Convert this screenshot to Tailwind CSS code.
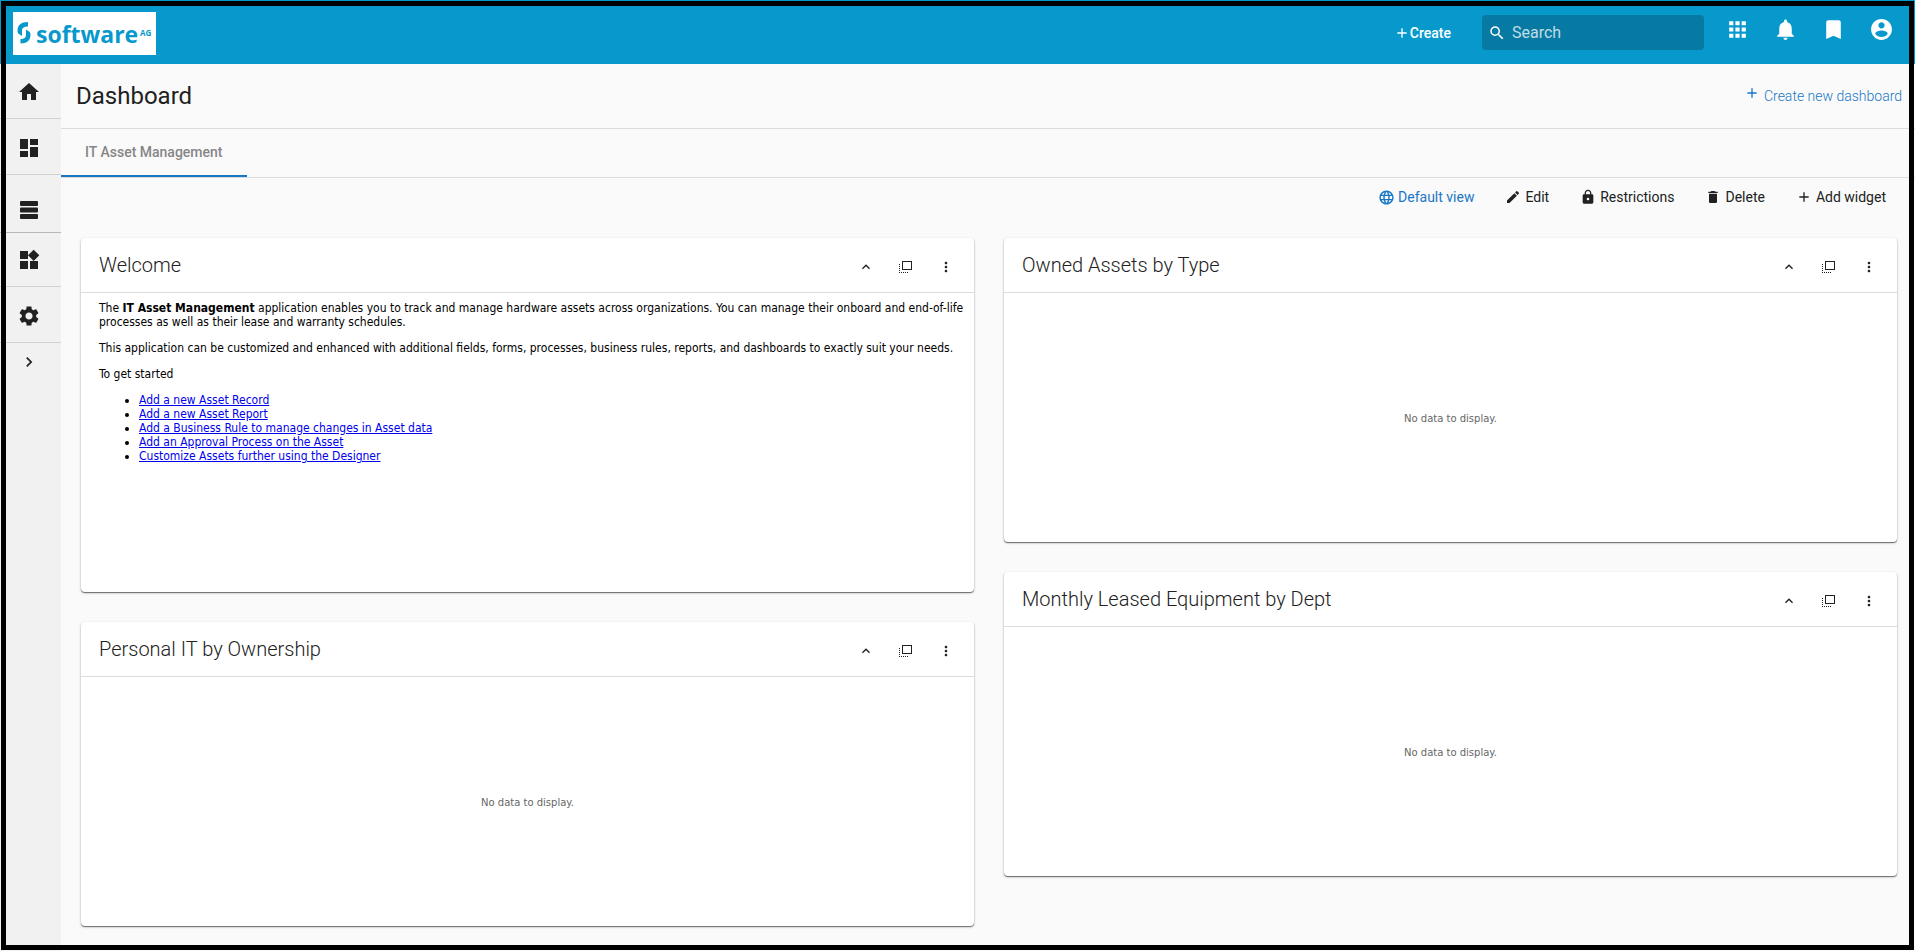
<!DOCTYPE html>
<html lang="en">
<head>
<meta charset="utf-8">
<title>Dashboard</title>
<script src="https://cdn.jsdelivr.net/npm/@tailwindcss/browser@4"></script>
</head>
<body class="min-h-screen flex flex-col bg-[#fafafa] font-[Roboto,sans-serif] text-[#212121]">
<svg class="hidden">
  <symbol id="up" viewBox="0 0 24 24"><path d="M12 8l-6 6 1.41 1.41L12 10.83l4.59 4.58L18 14z"/></symbol>
  <symbol id="flip" viewBox="0 0 14 14"><path d="M3 1h10v9H3zM4 2v7h8V2zM0 4h1v1H0zM0 6h1v1H0zM0 8h1v1H0zM0 10h1v1H0zM0 12h1v1H0zM2 12h1v1H2zM4 12h1v1H4zM6 12h1v1H6zM8 12h1v1H8z" fill-rule="evenodd"/></symbol>
  <symbol id="more" viewBox="0 0 24 24"><path d="M12 8c1.100 0 2-.9 2-2s-.9-2-2-2-2 .9-2 2 .9 2 2 2zm0 2c-1.100 0-2 .9-2 2s.9 2 2 2 2-.9 2-2-.9-2-2-2zm0 6c-1.100 0-2 .9-2 2s.9 2 2 2 2-.9 2-2-.9-2-2-2z"/></symbol>
  <symbol id="plus" viewBox="0 0 24 24"><path d="M19 13h-6v6h-2v-6H5v-2h6V5h2v6h6z"/></symbol>
</svg>
<div class="pointer-events-none fixed inset-px z-10 border-5 border-black"></div>

<header class="flex h-16 shrink-0 items-start bg-[#0899cc] pl-[13px] pr-[21px] pt-3 text-white">
  <a href="#" aria-label="Software AG" class="flex h-[43px] w-[143px] bg-white">
    <svg class="h-full w-full" viewBox="0 0 143 43" fill="#0899cc">
      <path d="M15 10v4.500c-4.500 0-6 1.500-6 4.500v5l-3-2c-1-.8-1.500-1.500-1.500-3C4.500 13 8 10 15 10zM7.500 31.500V27c4 0 5.500-1.500 5.500-4.500v-5l3 2c1 .8 1.500 1.500 1.500 3 0 6-3.500 9-10 9z"/>
      <text x="23" y="31" font-family="Open Sans, sans-serif" font-weight="700" font-size="23">software</text>
      <text x="127" y="24" font-family="Open Sans, sans-serif" font-weight="700" font-size="8">AG</text>
    </svg>
  </a>
  <button class="ml-auto mt-[9px] flex items-center text-sm leading-6 font-medium"><svg class="size-4" fill="currentColor"><use href="#plus"/></svg>Create</button>
  <label class="ml-[31px] mt-[3px] flex h-[35px] w-[222px] items-center gap-1.5 rounded bg-[#077aa3] pl-1.5">
    <svg class="size-[18px] shrink-0" viewBox="0 0 24 24" fill="currentColor"><path d="M15.500 14h-.79l-.28-.27A6.470 6.470 0 0 0 16 9.500 6.500 6.500 0 1 0 9.500 16c1.610 0 3.090-.59 4.230-1.570l.27.28v.79l5 4.990L20.490 19l-4.990-5zm-6 0C7.010 14 5 11.990 5 9.500S7.010 5 9.500 5 14 7.010 14 9.500 11.990 14 9.500 14z"/></svg>
    <input type="search" aria-label="Search" placeholder="Search" class="min-w-0 flex-1 bg-transparent text-base text-white placeholder:text-white/75 outline-none">
  </label>
  <nav class="ml-[21px] mt-[5px] flex gap-[23px]">
    <button aria-label="Apps"><svg class="size-[25px]" viewBox="0 0 24 24" fill="currentColor"><path d="M4 8h4V4H4v4zm6 12h4v-4h-4v4zm-6 0h4v-4H4v4zm0-6h4v-4H4v4zm6 0h4v-4h-4v4zm6-10v4h4V4h-4zm-6 4h4V4h-4v4zm6 6h4v-4h-4v4zm0 6h4v-4h-4v4z"/></svg></button>
    <button aria-label="Notifications"><svg class="size-[25px]" viewBox="0 0 24 24" fill="currentColor"><path d="M12 22c1.100 0 2-.9 2-2h-4c0 1.100.89 2 2 2zm6-6v-5c0-3.070-1.640-5.640-4.500-6.320V4c0-.83-.67-1.500-1.500-1.500s-1.500.67-1.500 1.500v.68C7.630 5.360 6 7.920 6 11v5l-2 2v1h16v-1l-2-2z"/></svg></button>
    <button aria-label="Bookmarks"><svg class="size-[25px]" viewBox="0 0 24 24" fill="currentColor"><path d="M17 3H7c-1.100 0-1.990.9-1.990 2L5 21l7-3 7 3V5c0-1.100-.9-2-2-2z"/></svg></button>
    <button aria-label="Account"><svg class="size-[25px]" viewBox="0 0 24 24" fill="currentColor"><path d="M12 2C6.480 2 2 6.480 2 12s4.480 10 10 10 10-4.480 10-10S17.520 2 12 2zm0 3c1.660 0 3 1.340 3 3s-1.340 3-3 3-3-1.340-3-3 1.340-3 3-3zm0 14.200c-2.500 0-4.710-1.280-6-3.220.03-1.990 4-3.080 6-3.080 1.990 0 5.970 1.090 6 3.080-1.290 1.940-3.500 3.220-6 3.220z"/></svg></button>
  </nav>
</header>

<div class="flex flex-1">
  <nav class="w-[61px] shrink-0 bg-[#f1f1f1] text-[#212121]">
    <a href="#" aria-label="Home" class="flex h-[55px] items-center border-b border-[#d2d2d2] pl-[17px] pt-px"><svg class="size-6" viewBox="0 0 24 24" fill="currentColor"><path d="M10 20v-6h4v6h5v-8h3L12 3 2 12h3v8z"/></svg></a>
    <a href="#" aria-label="Dashboards" class="flex h-14 items-center border-b border-[#d2d2d2] pl-[17px] pt-0.5"><svg class="size-6" viewBox="0 0 24 24" fill="currentColor"><path d="M3 13h8V3H3v10zm0 8h8v-6H3v6zm10 0h8V11h-8v10zm0-18v6h8V3h-8z"/></svg></a>
    <a href="#" aria-label="Records" class="flex h-[58px] items-center border-b border-[#b8b8b8] pl-5 pt-3"><svg class="size-[18px]" viewBox="0 0 18 18" fill="currentColor"><rect width="18" height="5" rx="1"/><rect y="6.500" width="18" height="5" rx="1"/><rect y="13" width="18" height="5" rx="1"/></svg></a>
    <a href="#" aria-label="Widgets" class="flex h-[54px] items-center border-b border-[#d2d2d2] pl-[17px]"><svg class="size-6" viewBox="0 0 24 24" fill="currentColor"><path d="M13 13v8h8v-8h-8zM3 21h8v-8H3v8zM3 3v8h8V3H3zm13.660-1.310L11 7.340 16.660 13l5.660-5.660-5.660-5.650z"/></svg></a>
    <a href="#" aria-label="Settings" class="flex h-14 items-center border-b border-[#d2d2d2] pl-[17px] pt-0.5"><svg class="size-6" viewBox="0 0 24 24" fill="currentColor"><path d="M19.140 12.940c.04-.3.06-.61.06-.94 0-.32-.02-.64-.07-.94l2.030-1.580c.18-.14.23-.41.12-.61l-1.920-3.320c-.12-.22-.37-.29-.59-.22l-2.390.96c-.5-.38-1.030-.7-1.620-.94l-.36-2.540c-.04-.24-.24-.41-.48-.41h-3.840c-.24 0-.43.17-.47.41l-.36 2.540c-.59.24-1.130.57-1.620.94l-2.390-.96c-.22-.08-.47 0-.59.22L2.740 8.870c-.12.21-.08.47.12.61l2.030 1.580c-.05.3-.09.63-.09.94s.02.64.07.94l-2.030 1.580c-.18.14-.23.41-.12.61l1.920 3.320c.12.22.37.29.59.22l2.390-.96c.5.38 1.030.7 1.620.94l.36 2.540c.05.24.24.41.48.41h3.840c.24 0 .44-.17.47-.41l.36-2.540c.59-.24 1.130-.56 1.620-.94l2.390.96c.22.08.47 0 .59-.22l1.920-3.320c.12-.22.07-.47-.12-.61l-2.010-1.580zM12 15.600c-1.980 0-3.600-1.620-3.600-3.600s1.620-3.600 3.600-3.600 3.600 1.620 3.600 3.600-1.620 3.600-3.600 3.600z"/></svg></a>
    <button aria-label="Expand menu" class="flex h-[38px] items-center pl-[19px]"><svg class="size-5" viewBox="0 0 24 24" fill="currentColor"><path d="M10 6L8.590 7.410 13.170 12l-4.580 4.590L10 18l6-6z"/></svg></button>
  </nav>

  <main class="min-w-0 flex-1">
    <div class="flex h-[65px] items-center justify-between border-b border-[#dcdcdc] pl-[15px] pr-[13px]">
      <h1 class="text-2xl">Dashboard</h1>
      <a href="#" class="flex items-center gap-1 text-sm font-light text-[#1976c5]"><svg class="mb-1.5 size-4" fill="currentColor"><use href="#plus"/></svg>Create new dashboard</a>
    </div>
    <div class="flex h-[49px] border-b border-[#dcdcdc]" role="tablist">
      <button role="tab" aria-selected="true" class="border-b-2 border-[#1976c5] px-6 text-sm font-medium text-[#868686]">IT Asset Management</button>
    </div>
    <div class="flex h-[38px] items-center justify-end gap-[31px] pr-[29px] text-sm">
      <button class="flex items-center gap-[3px] text-[#1976c5]"><svg class="size-[17px]" viewBox="0 0 24 24" fill="currentColor"><path d="M11.990 2C6.470 2 2 6.480 2 12s4.470 10 9.990 10C17.520 22 22 17.520 22 12S17.520 2 11.990 2zm6.930 6h-2.950c-.32-1.250-.78-2.450-1.380-3.560 1.840.63 3.370 1.910 4.330 3.560zM12 4.040c.83 1.200 1.480 2.530 1.910 3.960h-3.820c.43-1.430 1.080-2.760 1.910-3.960zM4.260 14C4.100 13.360 4 12.690 4 12s.1-1.360.26-2h3.380c-.08.66-.14 1.320-.14 2s.06 1.340.14 2H4.260zm.82 2h2.950c.32 1.250.78 2.450 1.380 3.560-1.840-.63-3.370-1.900-4.330-3.560zm2.950-8H5.080c.96-1.660 2.490-2.930 4.330-3.560C8.810 5.550 8.350 6.750 8.030 8zM12 19.960c-.83-1.200-1.480-2.530-1.910-3.960h3.820c-.43 1.430-1.080 2.760-1.910 3.960zM14.340 14H9.660c-.09-.66-.16-1.320-.16-2s.07-1.350.16-2h4.680c.09.65.16 1.320.16 2s-.07 1.340-.16 2zm.25 5.560c.6-1.110 1.060-2.310 1.380-3.560h2.950c-.96 1.650-2.490 2.930-4.330 3.560zM16.360 14c.08-.66.14-1.320.14-2s-.06-1.340-.14-2h3.380c.16.64.26 1.310.26 2s-.1 1.360-.26 2h-3.380z"/></svg>Default view</button>
      <button class="flex items-center gap-1"><svg class="size-4" viewBox="0 0 24 24" fill="currentColor"><path d="M3 17.250V21h3.750L17.810 9.940l-3.750-3.750L3 17.250zM20.710 7.040c.39-.39.39-1.020 0-1.410l-2.340-2.340c-.39-.39-1.020-.39-1.410 0l-1.830 1.830 3.750 3.750 1.830-1.830z"/></svg>Edit</button>
      <button class="flex items-center gap-1"><svg class="size-4" viewBox="0 0 24 24" fill="currentColor"><path d="M18 8h-1V6c0-2.760-2.240-5-5-5S7 3.240 7 6v2H6c-1.100 0-2 .9-2 2v10c0 1.100.9 2 2 2h12c1.100 0 2-.9 2-2V10c0-1.100-.9-2-2-2zm-6 9c-1.100 0-2-.9-2-2s.9-2 2-2 2 .9 2 2-.9 2-2 2zm3.100-9H8.900V6c0-1.710 1.390-3.100 3.100-3.100s3.100 1.390 3.100 3.100v2z"/></svg>Restrictions</button>
      <button class="flex items-center gap-1"><svg class="size-4" viewBox="0 0 24 24" fill="currentColor"><path d="M6 19c0 1.100.9 2 2 2h8c1.100 0 2-.9 2-2V7H6v12zM19 4h-3.500l-1-1h-5l-1 1H5v2h14V4z"/></svg>Delete</button>
      <button class="flex items-center gap-1"><svg class="size-4" fill="currentColor"><use href="#plus"/></svg>Add widget</button>
    </div>

    <div class="grid grid-cols-2 gap-[30px] pb-6 pl-5 pr-[18px] pt-[22px]">
      <div class="flex flex-col gap-[30px]">
        <section class="flex h-[354px] flex-col rounded-sm bg-white shadow-[0_1px_1px_rgba(0,0,0,0.5),0_1px_3px_rgba(0,0,0,0.2)]">
          <div class="flex h-[55px] shrink-0 items-center gap-6 border-b border-[#dcdcdc] pl-[18px] pr-5">
            <h2 class="mr-auto text-xl font-light">Welcome</h2>
            <button aria-label="Collapse" class="pt-1"><svg class="size-4" fill="currentColor"><use href="#up"/></svg></button>
            <button aria-label="Restore" class="pt-1"><svg class="mx-px size-3.5" fill="currentColor"><use href="#flip"/></svg></button>
            <button aria-label="More" class="pt-1"><svg class="size-4" fill="currentColor"><use href="#more"/></svg></button>
          </div>
          <div class="pl-[18px] pr-1 pt-2 font-['DejaVu_Sans_Condensed','DejaVu_Sans',sans-serif] text-xs leading-[14px] text-black">
            <p>The <b>IT Asset Management</b> application enables you to track and manage hardware assets across organizations. You can manage their onboard and <span class="whitespace-nowrap">end-of-life</span> processes as well as their lease and warranty schedules.</p>
            <p class="mt-3">This application can be customized and enhanced with additional fields, forms, processes, business rules, reports, and dashboards to exactly suit your needs.</p>
            <p class="mt-3">To get started</p>
            <ul class="mt-3 list-disc pl-10">
              <li><a href="#" class="text-[#0000ee] underline">Add a new Asset Record</a></li>
              <li><a href="#" class="text-[#0000ee] underline">Add a new Asset Report</a></li>
              <li><a href="#" class="text-[#0000ee] underline">Add a Business Rule to manage changes in Asset data</a></li>
              <li><a href="#" class="text-[#0000ee] underline">Add an Approval Process on the Asset</a></li>
              <li><a href="#" class="text-[#0000ee] underline">Customize Assets further using the Designer</a></li>
            </ul>
          </div>
        </section>
        <section class="flex h-[304px] flex-col rounded-sm bg-white shadow-[0_1px_1px_rgba(0,0,0,0.5),0_1px_3px_rgba(0,0,0,0.2)]">
          <div class="flex h-[55px] shrink-0 items-center gap-6 border-b border-[#dcdcdc] pl-[18px] pr-5">
            <h2 class="mr-auto text-xl font-light">Personal IT by Ownership</h2>
            <button aria-label="Collapse" class="pt-1"><svg class="size-4" fill="currentColor"><use href="#up"/></svg></button>
            <button aria-label="Restore" class="pt-1"><svg class="mx-px size-3.5" fill="currentColor"><use href="#flip"/></svg></button>
            <button aria-label="More" class="pt-1"><svg class="size-4" fill="currentColor"><use href="#more"/></svg></button>
          </div>
          <p class="m-auto pt-0.5 font-['DejaVu_Sans',sans-serif] text-[10px] text-[#666]">No data to display.</p>
        </section>
      </div>
      <div class="flex flex-col gap-[30px]">
        <section class="flex h-[304px] flex-col rounded-sm bg-white shadow-[0_1px_1px_rgba(0,0,0,0.5),0_1px_3px_rgba(0,0,0,0.2)]">
          <div class="flex h-[55px] shrink-0 items-center gap-6 border-b border-[#dcdcdc] pl-[18px] pr-5">
            <h2 class="mr-auto text-xl font-light">Owned Assets by Type</h2>
            <button aria-label="Collapse" class="pt-1"><svg class="size-4" fill="currentColor"><use href="#up"/></svg></button>
            <button aria-label="Restore" class="pt-1"><svg class="mx-px size-3.5" fill="currentColor"><use href="#flip"/></svg></button>
            <button aria-label="More" class="pt-1"><svg class="size-4" fill="currentColor"><use href="#more"/></svg></button>
          </div>
          <p class="m-auto pt-0.5 font-['DejaVu_Sans',sans-serif] text-[10px] text-[#666]">No data to display.</p>
        </section>
        <section class="flex h-[304px] flex-col rounded-sm bg-white shadow-[0_1px_1px_rgba(0,0,0,0.5),0_1px_3px_rgba(0,0,0,0.2)]">
          <div class="flex h-[55px] shrink-0 items-center gap-6 border-b border-[#dcdcdc] pl-[18px] pr-5">
            <h2 class="mr-auto text-xl font-light">Monthly Leased Equipment by Dept</h2>
            <button aria-label="Collapse" class="pt-1"><svg class="size-4" fill="currentColor"><use href="#up"/></svg></button>
            <button aria-label="Restore" class="pt-1"><svg class="mx-px size-3.5" fill="currentColor"><use href="#flip"/></svg></button>
            <button aria-label="More" class="pt-1"><svg class="size-4" fill="currentColor"><use href="#more"/></svg></button>
          </div>
          <p class="m-auto pt-0.5 font-['DejaVu_Sans',sans-serif] text-[10px] text-[#666]">No data to display.</p>
        </section>
      </div>
    </div>
  </main>
</div>
</body>
</html>
